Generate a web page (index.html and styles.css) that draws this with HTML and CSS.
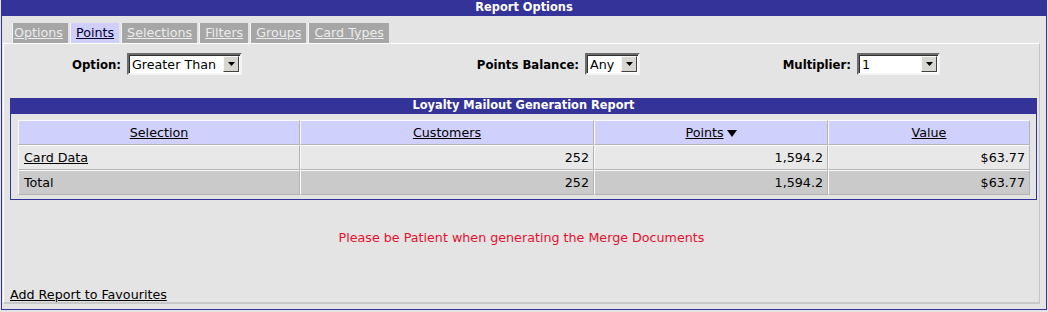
FILE: index.html
```html
<!DOCTYPE html>
<html>
<head>
<meta charset="utf-8">
<link rel="stylesheet" href="styles.css">
</head>
<body>
<div class="frame">
  <div class="title">Report Options</div>
  <div class="main">
    <div class="tabs">
      <a class="tab first" href="#">Options</a>
      <a class="tab active" href="#">Points</a>
      <a class="tab" href="#">Selections</a>
      <a class="tab" href="#">Filters</a>
      <a class="tab" href="#">Groups</a>
      <a class="tab" href="#">Card&nbsp;Types</a>
    </div>
    <div class="panel">
      <div class="opts">
        <span class="lbl">Option:</span>
        <div class="cell"><span class="sel w1"><span class="val">Greater Than</span><span class="btn"><svg width="7" height="4" viewBox="0 0 7 4"><path d="M0 0H7L3.5 4Z" fill="#000"/></svg></span></span></div>
        <span class="lbl">Points Balance:</span>
        <div class="cell"><span class="sel w2"><span class="val">Any</span><span class="btn"><svg width="7" height="4" viewBox="0 0 7 4"><path d="M0 0H7L3.5 4Z" fill="#000"/></svg></span></span></div>
        <span class="lbl">Multiplier:</span>
        <div class="cell"><span class="sel w3"><span class="val">1</span><span class="btn"><svg width="7" height="4" viewBox="0 0 7 4"><path d="M0 0H7L3.5 4Z" fill="#000"/></svg></span></span></div>
      </div>
      <div class="report">
        <div class="rtitle">Loyalty Mailout Generation Report</div>
        <div class="rbody">
          <table class="grid">
            <colgroup>
              <col class="c1"><col class="c2"><col class="c3"><col class="c4">
            </colgroup>
            <thead>
              <tr>
                <th><a href="#">Selection</a></th>
                <th><a href="#">Customers</a></th>
                <th><a href="#">Points</a><svg class="sort" width="10" height="7" viewBox="0 0 10 7"><path d="M0 0H10L5 7Z" fill="#000"/></svg></th>
                <th><a href="#">Value</a></th>
              </tr>
            </thead>
            <tbody>
              <tr class="data">
                <td class="name"><a href="#">Card Data</a></td>
                <td class="num">252</td>
                <td class="num">1,594.2</td>
                <td class="num">$63.77</td>
              </tr>
              <tr class="total">
                <td class="name">Total</td>
                <td class="num">252</td>
                <td class="num">1,594.2</td>
                <td class="num">$63.77</td>
              </tr>
            </tbody>
          </table>
        </div>
      </div>
      <p class="note">Please be Patient when generating the Merge Documents</p>
      <a class="fav" href="#">Add Report to Favourites</a>
    </div>
  </div>
</div>
</body>
</html>
```

FILE: styles.css
```css
html, body {
  margin: 0;
  padding: 0;
  background: #e4e4e4;
}
body {
  font-family: "DejaVu Sans", sans-serif;
  font-size: 12.7px;
  color: #000;
}
.frame {
  box-sizing: border-box;
  margin-left: 1px;
  width: 1046px;
  height: 310px;
  border: 1px solid #333399;
  border-top: 0;
  background: #e4e4e4;
  display: flex;
  flex-direction: column;
}
.title {
  height: 16px;
  line-height: 15px;
  background: #333399;
  color: #fff;
  font-weight: bold;
  font-size: 11.4px;
  text-align: center;
}
.main {
  flex: 1;
  display: flex;
  flex-direction: column;
  padding: 7px 6px 5px 1px;
}
.tabs {
  display: flex;
  padding-left: 9px;
  height: 20px;
}
.tab {
  display: block;
  box-sizing: border-box;
  height: 20px;
  line-height: 19px;
  padding: 0 5px;
  margin-right: 2px;
  background: #a6a6a6;
  border-left: 1px solid #f4f4f4;
  color: #ececec;
  text-decoration: underline;
}
.tab.first {
  padding-left: 1px;
}
.tab.active {
  background: #cfcffa;
  color: #000033;
}
.panel {
  flex: 1;
  display: flex;
  flex-direction: column;
  border-top: 1px solid #ffffff;
  border-left: 1px solid #ffffff;
  border-right: 1px solid #c4c4c4;
  border-bottom: 2px solid #c8c8c8;
}
.opts {
  display: grid;
  grid-template-columns: 117px 299px 159px 121px 151px 1fr;
  align-items: center;
  margin-top: 9px;
  height: 22px;
}
.lbl {
  font-family: "DejaVu Sans Condensed", "DejaVu Sans", sans-serif;
  font-stretch: condensed;
  font-size: 13px;
  font-weight: bold;
  text-align: right;
}
.cell {
  padding-left: 6px;
  display: flex;
}
.sel {
  box-sizing: border-box;
  display: flex;
  align-items: center;
  height: 22px;
  background: #fff;
  border-style: solid;
  border-width: 2px;
  border-color: #6c6c6c #f4f4f4 #f4f4f4 #6c6c6c;
  box-shadow: inset 1px 1px 0 #303030;
}
.sel .val {
  flex: 1;
  padding-left: 3px;
  white-space: nowrap;
}
.sel .btn {
  box-sizing: border-box;
  width: 16px;
  height: 16px;
  margin-right: 1px;
  background: #d8d6d0;
  border-style: solid;
  border-width: 1px;
  border-color: #f8f8f8 #404040 #404040 #f8f8f8;
  display: flex;
  align-items: center;
  justify-content: center;
}
.w1 { width: 115px; }
.w2 { width: 55px; }
.w3 { width: 83px; }
.report {
  margin: 23px 2px 0 6px;
  border: 1px solid #333399;
  border-top: 0;
}
.rtitle {
  height: 16px;
  line-height: 15px;
  background: #333399;
  color: #fff;
  font-weight: bold;
  font-size: 11.4px;
  text-align: center;
}
.rbody {
  padding: 6px 6px 4px 7px;
}
.grid {
  width: 100%;
  border-collapse: separate;
  border-spacing: 0;
  table-layout: fixed;
}
.c1 { width: 282px; }
.c2 { width: 294px; }
.c3 { width: 234px; }
.grid th, .grid td {
  border-style: solid;
  border-width: 1px;
  border-color: #fafafa #b4b4b4 #b4b4b4 #fafafa;
  padding: 0 4px;
  height: 23px;
  white-space: nowrap;
}
.grid th {
  background: #d0d0fc;
  font-weight: normal;
  text-align: center;
}
.grid a {
  color: #000;
}
.grid .sort {
  margin-left: 3px;
}
.grid .data td {
  background: #e8e8e8;
}
.grid .total td {
  background: #cacaca;
}
.grid .num {
  text-align: right;
}
.grid .name {
  padding-left: 5px;
}
.note {
  margin: 30px 0 0 0;
  line-height: 16px;
  text-align: center;
  color: #e4102c;
}
.fav {
  margin-top: auto;
  margin-left: 6px;
  align-self: flex-start;
  line-height: 15px;
  color: #000;
  text-decoration: underline;
}
```
